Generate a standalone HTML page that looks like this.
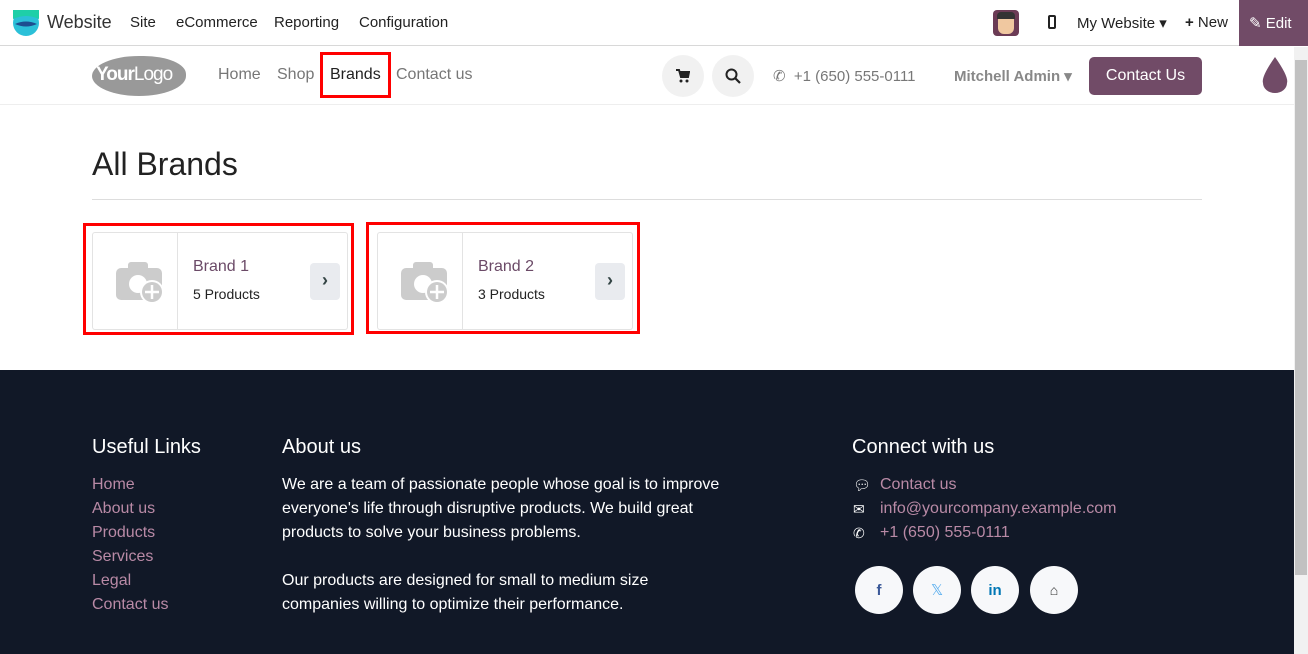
<!DOCTYPE html>
<html><head><meta charset="utf-8"><style>
*{box-sizing:border-box;margin:0;padding:0}
body{width:1308px;height:654px;overflow:hidden;font-family:"Liberation Sans",sans-serif;background:#fff;position:relative}
.abs{position:absolute}
.top{position:absolute;left:0;top:0;width:1308px;height:46px;background:#fff;border-bottom:1px solid #d8d8d8;font-size:15px;color:#222}
.top span{position:absolute;top:14px}
.hdr{position:absolute;left:0;top:47px;width:1294px;height:58px;border-bottom:1px solid #eee;background:#fff}
.nav{position:absolute;top:19px;font-size:16px;color:#777}
.circ{position:absolute;width:42px;height:42px;border-radius:50%;background:#f1f1f1;top:8px}
.card{position:absolute;top:232px;width:256px;height:98px;border:1px solid #e3e3e3;border-radius:3px}
.red{position:absolute;border:3px solid #f00}
footer{position:absolute;left:0;top:370px;width:1294px;height:284px;background:#111827;color:#fff}
footer h4{position:absolute;font-weight:normal;font-size:20px;top:66px}
.lk{position:absolute;font-size:16px;color:#b98aa6;line-height:24px}
.soc{position:absolute;top:196px;width:48px;height:48px;border-radius:50%;background:#f7f8fa;display:flex;align-items:center;justify-content:center;font-weight:bold;font-size:15px}
</style></head><body>
<div class="top">
 <svg class="abs" style="left:13px;top:10px" width="26" height="26" viewBox="0 0 26 26"><circle cx="13" cy="13" r="13" fill="#2bc0d8"/><path d="M0 9 Q13 3 26 9 L26 0 0 0Z" fill="#1ecfa8"/><path d="M2 14 Q13 9 24 14 Q13 19 2 14Z" fill="#1d4e8f"/></svg>
 <span style="left:47px;top:12px;font-size:18px;color:#333">Website</span>
 <span style="left:130px">Site</span><span style="left:176px">eCommerce</span><span style="left:274px">Reporting</span><span style="left:359px">Configuration</span>
 <div class="abs" style="left:993px;top:10px;width:26px;height:26px;border-radius:4px;background:#6b3b55"><div class="abs" style="left:5px;top:4px;width:16px;height:20px;border-radius:6px;background:#f0c8a0"></div><div class="abs" style="left:4px;top:2px;width:18px;height:7px;background:#333;border-radius:4px 4px 0 0"></div></div>
 <div class="abs" style="left:1048px;top:15px;width:8px;height:14px;border:2px solid #222;border-radius:2px"></div>
 <span style="left:1077px">My Website ▾</span>
 <span style="left:1185px"><b>+</b> New</span>
 <div class="abs" style="left:1239px;top:0;width:69px;height:46px;background:#714b67;color:#fff"><span style="left:10px;color:#fff">✎ Edit</span></div>
</div>
<div class="hdr">
 <div class="abs" style="left:92px;top:9px;width:94px;height:40px;background:#999;border-radius:50% 45% 50% 50%"></div>
 <div class="abs" style="left:96px;top:17px;font-size:19px;color:#fff;letter-spacing:-1px"><b>Your</b>Logo</div>
 <span class="nav" style="left:218px">Home</span><span class="nav" style="left:277px">Shop</span><span class="nav" style="left:330px;color:#222">Brands</span><span class="nav" style="left:396px">Contact us</span>
 <div class="circ" style="left:662px"><svg class="abs" style="left:14px;top:14px" width="14" height="14" viewBox="0 0 14 14"><path d="M0 1h3l2 7h7l1-5H4" fill="none" stroke="#222" stroke-width="2"/><rect x="4" y="3" width="9" height="5" fill="#222"/><circle cx="5" cy="12" r="1.5" fill="#222"/><circle cx="11" cy="12" r="1.5" fill="#222"/></svg></div>
 <div class="circ" style="left:712px"><svg class="abs" style="left:13px;top:13px" width="16" height="16"><circle cx="6.5" cy="6.5" r="5" fill="none" stroke="#222" stroke-width="2"/><path d="M10 10 L15 15" stroke="#222" stroke-width="2.2"/></svg></div>
 <span class="nav" style="left:773px;font-size:15px;top:20px">✆ &nbsp;+1 (650) 555-0111</span>
 <span class="nav" style="left:954px;font-size:15px;top:20px;font-weight:bold;color:#888">Mitchell Admin ▾</span>
 <div class="abs" style="left:1089px;top:10px;width:113px;height:38px;background:#714b67;border-radius:5px;color:#fff;font-size:16px;text-align:center;line-height:38px">Contact Us</div>
 <svg class="abs" style="left:1261px;top:10px" width="28" height="36" viewBox="0 0 28 36"><path d="M14 0 Q28 20 26 26 A12 10 0 0 1 2 26 Q0 20 14 0Z" fill="#714b67"/></svg>
</div>
<div class="abs" style="left:1294px;top:47px;width:14px;height:607px;background:#f1f1f1"><div class="abs" style="left:1px;top:13px;width:12px;height:515px;background:#c1c1c1"></div></div>
<div class="abs" style="left:92px;top:146px;font-size:32px;color:#222">All Brands</div>
<div class="abs" style="left:92px;top:199px;width:1110px;height:1px;background:#ddd"></div>
<div class="red" style="left:320px;top:52px;width:71px;height:46px"></div>
<div class="red" style="left:83px;top:223px;width:271px;height:112px"></div>
<div class="red" style="left:366px;top:222px;width:274px;height:112px"></div>
<div class="card" style="left:92px"><div class="abs" style="left:84px;top:0;width:1px;height:96px;background:#e3e3e3"></div>
 <svg class="abs" style="left:23px;top:29px" width="50" height="44"><rect x="0" y="6" width="46" height="32" rx="5" fill="#ccc"/><rect x="12" y="0" width="20" height="10" rx="3" fill="#ccc"/><circle cx="22" cy="22" r="9" fill="#fff"/><circle cx="36" cy="30" r="12" fill="#fff"/><circle cx="36" cy="30" r="10" fill="#ccc"/><path d="M36 23v14M29 30h14" stroke="#fff" stroke-width="2.5"/></svg>
 <div class="abs" style="left:100px;top:25px;font-size:16px;color:#6b4a67">Brand 1</div><div class="abs" style="left:100px;top:53px;font-size:14px;color:#222">5 Products</div>
 <div class="abs" style="left:217px;top:30px;width:30px;height:37px;background:#e9ebef;border-radius:4px;color:#344;font-weight:bold;font-size:18px;text-align:center;line-height:35px">›</div></div>
<div class="card" style="left:377px"><div class="abs" style="left:84px;top:0;width:1px;height:96px;background:#e3e3e3"></div>
 <svg class="abs" style="left:23px;top:29px" width="50" height="44"><rect x="0" y="6" width="46" height="32" rx="5" fill="#ccc"/><rect x="12" y="0" width="20" height="10" rx="3" fill="#ccc"/><circle cx="22" cy="22" r="9" fill="#fff"/><circle cx="36" cy="30" r="12" fill="#fff"/><circle cx="36" cy="30" r="10" fill="#ccc"/><path d="M36 23v14M29 30h14" stroke="#fff" stroke-width="2.5"/></svg>
 <div class="abs" style="left:100px;top:25px;font-size:16px;color:#6b4a67">Brand 2</div><div class="abs" style="left:100px;top:53px;font-size:14px;color:#222">3 Products</div>
 <div class="abs" style="left:217px;top:30px;width:30px;height:37px;background:#e9ebef;border-radius:4px;color:#344;font-weight:bold;font-size:18px;text-align:center;line-height:35px">›</div></div>
<footer>
 <h4 style="left:92px">Useful Links</h4><h4 style="left:282px">About us</h4><h4 style="left:852px">Connect with us</h4>
 <div class="lk" style="left:92px;top:103px">Home<br>About us<br>Products<br>Services<br>Legal<br>Contact us</div>
 <div class="lk" style="left:282px;top:103px;color:#fff">We are a team of passionate people whose goal is to improve<br>everyone's life through disruptive products. We build great<br>products to solve your business problems.<br><br>Our products are designed for small to medium size<br>companies willing to optimize their performance.</div>
 <div class="lk" style="left:853px;top:103px;color:#fff;font-size:14px">💬︎<br>✉<br>✆</div>
 <div class="lk" style="left:880px;top:103px">Contact us<br>info@yourcompany.example.com<br>+1 (650) 555-0111</div>
 <div class="soc" style="left:855px;color:#3b5998">f</div>
 <div class="soc" style="left:913px;color:#55acee;font-weight:normal">𝕏</div>
 <div class="soc" style="left:971px;color:#0077b5">in</div>
 <div class="soc" style="left:1030px;color:#333;font-size:14px">⌂</div>
</footer>
</body></html>
